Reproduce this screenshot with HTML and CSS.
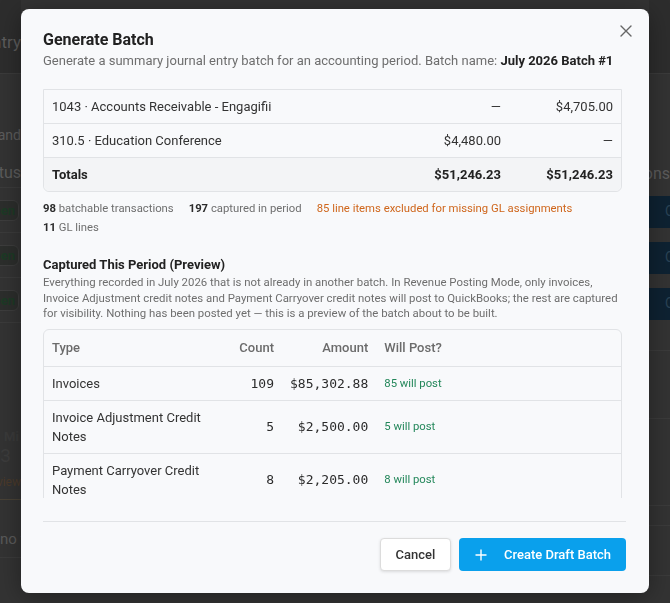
FILE: index.html
```html
<!DOCTYPE html>
<html lang="en">
<head>
    <meta charset="UTF-8">
    <meta name="viewport" content="width=device-width, initial-scale=1.0">
    <title>Journal Entry Batches</title>
    <link rel="stylesheet" href="styles.css">
</head>
<body>
    <!-- page underneath the dialog -->
    <div class="page">
        <aside class="page-side side-left">
            <div class="side-head"><span>Journal Entry</span></div>
            <div class="side-text t-debits"><span>Debits and</span></div>
            <div class="side-text t-status"><span>Status</span></div>
            <div class="side-row"><span class="pill">Open</span></div>
            <div class="side-row"><span class="pill">Open</span></div>
            <div class="side-row"><span class="pill">Open</span></div>
            <div class="side-card">
                <div class="card-label">Mi</div>
                <div class="card-value"><span>103</span></div>
                <div class="card-link"><span>Review</span></div>
            </div>
            <div class="side-note">no f</div>
        </aside>
        <aside class="page-side side-right">
            <div class="side-head"></div>
            <div class="side-text t-actions"><span>Actions</span></div>
            <div class="nav-btn">Open</div>
            <div class="nav-btn">Open</div>
            <div class="nav-btn">Open</div>
            <div class="side-line l1"></div>
            <div class="side-line l2"></div>
            <div class="side-line l3"></div>
            <div class="side-line l4"></div>
            <div class="side-line l5"></div>
        </aside>
    </div>

    <div class="modal" role="dialog" aria-labelledby="batchTitle">
        <button class="modal-close" aria-label="Close">
            <svg width="12" height="12" viewBox="0 0 12 12"><path d="M1 1L11 11M11 1L1 11" stroke="#666" stroke-width="1.4" stroke-linecap="round"/></svg>
        </button>

        <div class="modal-header">
            <h2 id="batchTitle">Generate Batch</h2>
            <p class="subtitle">Generate a summary journal entry batch for an accounting period. Batch name: <strong>July 2026 Batch #1</strong></p>
        </div>

        <div class="modal-body">
            <table class="gl-table">
                <tbody>
                    <tr>
                        <td>1043 · Accounts Receivable - Engagifii</td>
                        <td class="num">—</td>
                        <td class="num">$4,705.00</td>
                    </tr>
                    <tr>
                        <td>310.5 · Education Conference</td>
                        <td class="num">$4,480.00</td>
                        <td class="num">—</td>
                    </tr>
                    <tr class="totals">
                        <td>Totals</td>
                        <td class="num">$51,246.23</td>
                        <td class="num">$51,246.23</td>
                    </tr>
                </tbody>
            </table>

            <div class="stats">
                <span><b>98</b> batchable transactions</span>
                <span><b>197</b> captured in period</span>
                <span class="warn">85 line items excluded for missing GL assignments</span>
                <span><b>11</b> GL lines</span>
            </div>

            <h3 class="section-title">Captured This Period (Preview)</h3>
            <p class="section-desc">Everything recorded in July 2026 that is not already in another batch. In Revenue Posting Mode, only invoices, Invoice Adjustment credit notes and Payment Carryover credit notes will post to QuickBooks; the rest are captured for visibility. Nothing has been posted yet — this is a preview of the batch about to be built.</p>

            <table class="preview-table">
                <colgroup>
                    <col class="c-type">
                    <col class="c-count">
                    <col class="c-amount">
                    <col>
                </colgroup>
                <thead>
                    <tr>
                        <th>Type</th>
                        <th class="num">Count</th>
                        <th class="num">Amount</th>
                        <th>Will Post?</th>
                    </tr>
                </thead>
                <tbody>
                    <tr>
                        <td>Invoices</td>
                        <td class="num mono">109</td>
                        <td class="num mono">$85,302.88</td>
                        <td class="post">85 will post</td>
                    </tr>
                    <tr>
                        <td>Invoice Adjustment Credit Notes</td>
                        <td class="num mono">5</td>
                        <td class="num mono">$2,500.00</td>
                        <td class="post">5 will post</td>
                    </tr>
                    <tr>
                        <td>Payment Carryover Credit Notes</td>
                        <td class="num mono">8</td>
                        <td class="num mono">$2,205.00</td>
                        <td class="post">8 will post</td>
                    </tr>
                </tbody>
            </table>
        </div>

        <div class="modal-footer">
            <button class="btn btn-cancel">Cancel</button>
            <button class="btn btn-primary">
                <svg width="12" height="12" viewBox="0 0 12 12"><path d="M6 0.5V11.5M0.5 6H11.5" stroke="#fff" stroke-width="1.4"/></svg>
                <span>Create Draft Batch</span>
            </button>
        </div>
    </div>
</body>
</html>
```

FILE: styles.css
```css
:root {
    --backdrop: #333;
    --backdrop-top: #2d2d2d;
    --backdrop-line: #3b3b3b;
    --modal-bg: #f8f9fb;
    --border: #e1e3e6;
    --text-color: #2b2b2b;
    --muted: #6e6e6e;
    --warn: #cf661c;
    --ok: #23875a;
    --primary: #0aa0ec;
}

* {
    margin: 0;
    padding: 0;
    box-sizing: border-box;
}

body {
    font-family: Roboto, "Noto Sans", Arial, sans-serif;
    color: var(--text-color);
    background-color: var(--backdrop);
    height: 603px;
    overflow: hidden;
}

/* ---------- dimmed page behind the dialog ---------- */

.page {
    display: flex;
    justify-content: space-between;
    height: 100%;
}

.page-side {
    width: 21px;
    display: flex;
    flex-direction: column;
    overflow: hidden;
    color: #5c5c5c;
    white-space: nowrap;
}

.side-head {
    height: 74px;
    flex-shrink: 0;
    background-color: var(--backdrop-top);
    border-bottom: 1px solid var(--backdrop-line);
    display: flex;
    align-items: center;
    justify-content: flex-end;
    padding-top: 11px;
    font-size: 17px;
}

.side-text {
    display: flex;
    justify-content: flex-end;
    font-size: 14px;
    flex-shrink: 0;
}

.t-debits {
    margin-top: 53px;
}

.t-status {
    margin-top: 15px;
    font-size: 16px;
    height: 30px;
    align-items: center;
    border-bottom: 1px solid var(--backdrop-line);
}

.side-row {
    flex-shrink: 0;
    height: 45px;
    display: flex;
    align-items: center;
    justify-content: flex-end;
    border-bottom: 1px solid var(--backdrop-line);
}

.pill {
    font-size: 13px;
    font-weight: 700;
    color: #1c3a25;
    background-color: #2c2e2c;
    border: 1px solid #3d3d3d;
    border-radius: 6px;
    padding: 2px 3px 2px 8px;
    margin-right: 2px;
}

.side-card {
    flex-shrink: 0;
    margin-top: 106px;
    padding-bottom: 10px;
    border-bottom: 1px solid #494236;
}

.card-label {
    font-size: 13px;
    font-weight: 700;
    padding-left: 4px;
    color: #3a3a3a;
}

.card-value {
    display: flex;
    justify-content: flex-end;
    font-size: 19px;
    margin-right: 10px;
    color: #3c3c3c;
}

.card-link {
    display: flex;
    justify-content: flex-end;
    font-size: 12px;
    color: #4b3a2a;
    margin-top: 8px;
}

.side-note {
    flex-shrink: 0;
    margin-top: 30px;
    font-size: 15px;
    color: #5a5a5a;
    padding-bottom: 9px;
    border-bottom: 1px solid var(--backdrop-line);
}

.t-actions {
    margin-top: 88px;
    font-size: 16px;
    height: 22px;
    align-items: center;
}

.nav-btn {
    flex-shrink: 0;
    height: 32px;
    margin-top: 14px;
    background-color: #0e2232;
    color: #2a4255;
    font-size: 14px;
    padding: 7px 0 0 16px;
}

.t-actions + .nav-btn {
    margin-top: 12px;
}

.side-line {
    flex-shrink: 0;
    height: 1px;
    background-color: var(--backdrop-line);
}

.l1 { margin-top: 30px; }
.l2 { margin-top: 67px; }
.l3 { margin-top: 86px; }
.l4 { margin-top: 19px; }
.l5 { margin-top: 49px; }

/* ---------- dialog ---------- */

.modal {
    position: fixed;
    top: 9px;
    left: 21px;
    width: 628px;
    height: 584px;
    background-color: var(--modal-bg);
    border-radius: 8px;
    box-shadow: 0 4px 24px rgba(0, 0, 0, 0.35);
    padding: 0 23px 0 22px;
    display: flex;
    flex-direction: column;
}

.modal-close {
    position: absolute;
    top: 16px;
    right: 17px;
    width: 12px;
    height: 12px;
    border: none;
    background: none;
    cursor: pointer;
    display: flex;
}

.modal-header {
    padding-top: 20px;
    height: 80px;
    flex-shrink: 0;
}

.modal-header h2 {
    font-size: 16px;
    line-height: 22px;
    font-weight: 700;
    color: #212121;
}

.subtitle {
    font-size: 13px;
    line-height: 20px;
    color: var(--muted);
    white-space: nowrap;
}

.subtitle strong {
    color: #222;
    font-weight: 700;
}

.modal-body {
    height: 409px;
    flex-shrink: 0;
    overflow: hidden;
    padding-right: 4px;
}

table {
    width: 100%;
    border-collapse: separate;
    border-spacing: 0;
    font-size: 13px;
}

td, th {
    padding: 7px 8px;
    text-align: left;
    border-bottom: 1px solid var(--border);
}

.num {
    text-align: right;
}

.gl-table {
    border: 1px solid var(--border);
    border-radius: 0 0 6px 6px;
}

.gl-table td {
    line-height: 19px;
    color: #333;
}

.gl-table td.num {
    width: 112px;
}

.gl-table tr:last-child td {
    border-bottom: none;
}

.totals td {
    background-color: #f3f4f6;
    font-weight: 700;
    color: #222;
}

.totals td:first-child {
    border-bottom-left-radius: 6px;
}

.totals td:last-child {
    border-bottom-right-radius: 6px;
}

.stats {
    display: flex;
    flex-wrap: wrap;
    column-gap: 15px;
    margin-top: 7px;
    font-size: 11.3px;
    line-height: 19px;
    color: var(--muted);
}

.stats b {
    color: #2b2b2b;
    font-weight: 700;
}

.stats .warn {
    color: var(--warn);
}

.section-title {
    margin-top: 18px;
    font-size: 13px;
    line-height: 20px;
    font-weight: 700;
    color: #222;
}

.section-desc {
    max-width: 578px;
    font-size: 11.4px;
    line-height: 15.6px;
    color: var(--muted);
}

.preview-table {
    margin-top: 7px;
    border: 1px solid var(--border);
    border-radius: 6px;
}

.preview-table th {
    padding: 9px 8px;
    line-height: 18px;
    font-weight: 500;
    color: #6b6b6b;
}

.preview-table td {
    line-height: 19px;
    color: #333;
}

.c-type { width: 177px; }
.c-count { width: 61px; }
.c-amount { width: 94px; }

.preview-table .mono {
    font-family: "DejaVu Sans Mono", "Liberation Mono", monospace;
    font-size: 13px;
    color: #2b2b2b;
}

.preview-table .post {
    font-size: 11.3px;
    color: var(--ok);
}

.modal-footer {
    margin-top: 23px;
    border-top: 1px solid var(--border);
    padding-top: 16px;
    display: flex;
    justify-content: flex-end;
    gap: 8px;
}

.btn {
    height: 33px;
    border-radius: 4px;
    font-family: inherit;
    font-size: 13px;
    font-weight: 500;
    cursor: pointer;
    display: flex;
    align-items: center;
    white-space: nowrap;
}

.btn-cancel {
    width: 71px;
    justify-content: center;
    background-color: #fff;
    color: #333;
    border: 1px solid #dcdcdc;
    box-shadow: 0 1px 3px rgba(0, 0, 0, 0.12);
}

.btn-primary {
    width: 167px;
    padding: 0 0 0 16px;
    gap: 17px;
    background-color: var(--primary);
    color: #fff;
    border: none;
}
```
